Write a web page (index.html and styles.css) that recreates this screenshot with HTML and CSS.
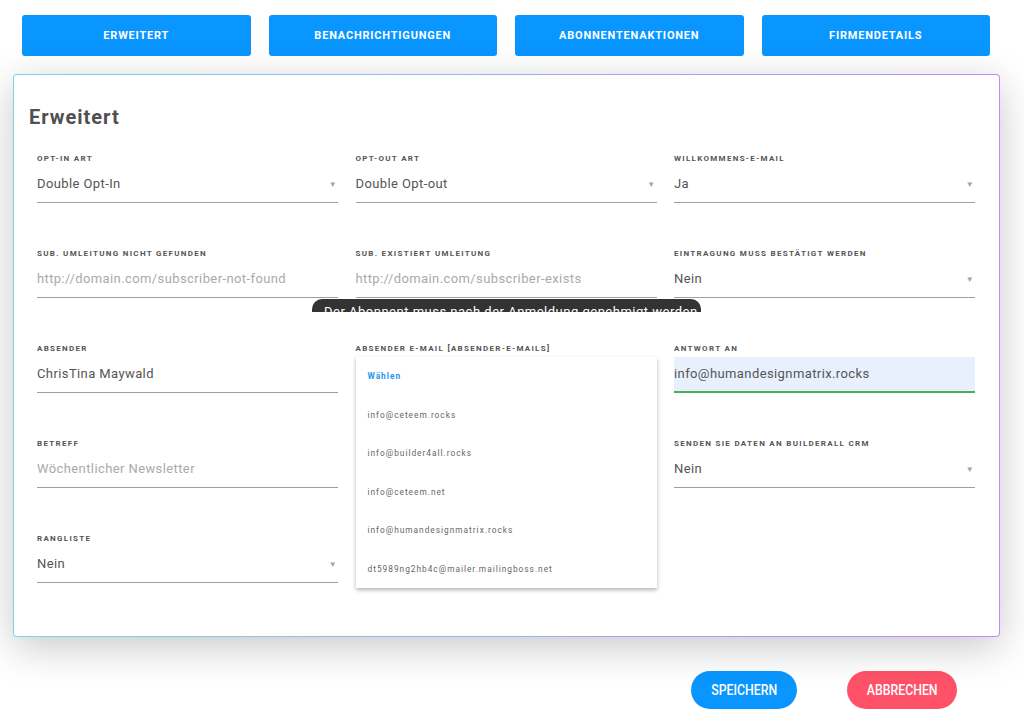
FILE: index.html
```html
<!DOCTYPE html>
<html lang="de">
<head>
    <meta charset="UTF-8">
    <meta name="viewport" content="width=device-width, initial-scale=1.0">
    <title>Einstellungen - Erweitert</title>
    <link rel="stylesheet" href="styles.css">
</head>
<body>
    <nav class="tabs">
        <button class="tab">Erweitert</button>
        <button class="tab">Benachrichtigungen</button>
        <button class="tab">Abonnentenaktionen</button>
        <button class="tab">Firmendetails</button>
    </nav>

    <section class="card">
        <h2>Erweitert</h2>

        <div class="tooltip">Der Abonnent muss nach der Anmeldung genehmigt werden</div>

        <form class="grid">
            <div class="field">
                <label>Opt-in Art</label>
                <div class="input select">Double Opt-In</div>
            </div>
            <div class="field">
                <label>Opt-out Art</label>
                <div class="input select">Double Opt-out</div>
            </div>
            <div class="field">
                <label>Willkommens-E-Mail</label>
                <div class="input select">Ja</div>
            </div>

            <div class="field">
                <label>Sub. Umleitung nicht gefunden</label>
                <div class="input placeholder">http://domain.com/subscriber-not-found</div>
            </div>
            <div class="field">
                <label>Sub. existiert Umleitung</label>
                <div class="input placeholder">http://domain.com/subscriber-exists</div>
            </div>
            <div class="field">
                <label>Eintragung muss bestätigt werden</label>
                <div class="input select">Nein</div>
            </div>

            <div class="field">
                <label>Absender</label>
                <div class="input">ChrisTina Maywald</div>
            </div>
            <div class="field">
                <label>Absender E-Mail [absender-e-mails]</label>
                <div class="input select"></div>
                <ul class="menu">
                    <li class="active">Wählen</li>
                    <li>info@ceteem.rocks</li>
                    <li>info@builder4all.rocks</li>
                    <li>info@ceteem.net</li>
                    <li>info@humandesignmatrix.rocks</li>
                    <li>dt5989ng2hb4c@mailer.mailingboss.net</li>
                </ul>
            </div>
            <div class="field">
                <label>Antwort an</label>
                <div class="input filled">info@humandesignmatrix.rocks</div>
            </div>

            <div class="field">
                <label>Betreff</label>
                <div class="input placeholder">Wöchentlicher Newsletter</div>
            </div>
            <div class="field"></div>
            <div class="field">
                <label>Senden Sie Daten an Builderall CRM</label>
                <div class="input select">Nein</div>
            </div>

            <div class="field">
                <label>Rangliste</label>
                <div class="input select">Nein</div>
            </div>
        </form>
    </section>

    <div class="actions">
        <button class="pill save"><span>Speichern</span></button>
        <button class="pill cancel"><span>Abbrechen</span></button>
    </div>
</body>
</html>
```

FILE: styles.css
```css
*{
    margin: 0;
    padding: 0;
    box-sizing: border-box;
    font-family: Roboto, 'Liberation Sans', sans-serif;
}

body {
    background-color: #fff;
    color: #555;
}

.tabs{
    display: grid;
    grid-template-columns: repeat(4, 1fr);
    gap: 18px;
    width: 968px;
    margin: 15px 0 0 22px;
}

.tab{
    height: 41px;
    border: none;
    border-radius: 3px;
    background-color: #0996ff;
    color: #fff;
    font-size: 11px;
    font-weight: bold;
    letter-spacing: 0.8px;
    text-transform: uppercase;
    cursor: pointer;
}

.card{
    position: relative;
    width: 987px;
    margin: 18px 0 0 13px;
    padding: 30px 15px 53px;
    border: 1px solid transparent;
    border-radius: 4px;
    background: linear-gradient(#fff, #fff) padding-box,
                linear-gradient(90deg, #72d6f1, #c48af6) border-box;
    box-shadow: 0 10px 40px rgba(0, 0, 0, 0.22);
}

.card h2{
    font-size: 20px;
    line-height: 24px;
    font-weight: bold;
    letter-spacing: 1px;
    color: #505050;
    margin-bottom: 25px;
}

.grid{
    display: grid;
    grid-template-columns: repeat(3, 301px);
    column-gap: 17.5px;
    row-gap: 46px;
    padding-left: 8px;
}

.field{
    position: relative;
}

.field label{
    display: block;
    font-size: 8px;
    line-height: 10px;
    font-weight: bold;
    letter-spacing: 1.3px;
    text-transform: uppercase;
    color: #555;
    margin-bottom: 3px;
}

.input{
    position: relative;
    height: 36px;
    padding-top: 8px;
    font-size: 13px;
    line-height: 18px;
    letter-spacing: 0.4px;
    color: #555;
    border-bottom: 1px solid #9e9e9e;
}

.placeholder{
    color: #aaa;
}

.select::after{
    content: "\25BC";
    position: absolute;
    right: 1px;
    top: 9px;
    font-size: 8px;
    color: #a5a5a5;
}

.filled{
    background-color: #e8f0fe;
    border-bottom: 2px solid #4caf50;
    height: 36px;
}

.menu{
    position: absolute;
    top: 13px;
    left: 0;
    width: 301px;
    list-style: none;
    background-color: #fff;
    box-shadow: 0 2px 4px rgba(0, 0, 0, 0.3);
    z-index: 2;
}

.menu li{
    height: 38.5px;
    line-height: 38.5px;
    padding-left: 12px;
    font-size: 8.3px;
    letter-spacing: 1px;
    color: #666;
}

.menu li.active{
    color: #2196f3;
    font-weight: bold;
}

.tooltip{
    position: absolute;
    left: 298px;
    top: 224px;
    width: 389px;
    height: 13px;
    overflow: hidden;
    padding: 5px 0 0 12px;
    border-radius: 10px 10px 0 0;
    background-color: #333;
    color: #fff;
    font-size: 13px;
    line-height: 16px;
    letter-spacing: 0.5px;
    white-space: nowrap;
    z-index: 3;
}

.actions{
    display: flex;
    justify-content: flex-end;
    gap: 50px;
    margin-top: 34px;
    padding-right: 67px;
}

.pill{
    height: 38px;
    border: none;
    border-radius: 19px;
    color: #fff;
    font-size: 15px;
    font-weight: 500;
    text-transform: uppercase;
    cursor: pointer;
}

.pill span{
    display: inline-block;
    transform: scaleX(0.82);
}

.save{
    width: 106px;
    background-color: #0996ff;
}

.cancel{
    width: 110px;
    background-color: #ff5269;
}
```
